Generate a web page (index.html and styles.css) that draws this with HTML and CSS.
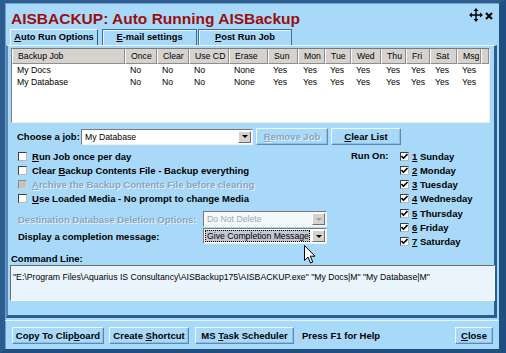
FILE: index.html
```html
<!DOCTYPE html>
<html lang="en">
<head>
  <meta charset="UTF-8">
  <title>AISBACKUP: Auto Running AISBackup</title>
  <link rel="stylesheet" href="styles.css">
</head>
<body>
  <div class="window">
    <div class="titlebar">
      <h1 class="title">AISBACKUP: Auto Running AISBackup</h1>
      <div class="caption-icons">
        <svg class="icon-move" width="14" height="14" viewBox="0 0 14 14">
          <path d="M7 1 V13 M1 7 H13" stroke="#000" stroke-width="1.4" fill="none"/>
          <path d="M7 0 L9.5 3 H4.5 Z M7 14 L9.5 11 H4.5 Z M0 7 L3 4.5 V9.5 Z M14 7 L11 4.5 V9.5 Z" fill="#000"/>
        </svg>
        <svg class="icon-close" width="8" height="8" viewBox="0 0 8 8">
          <path d="M1 1 L7 7 M7 1 L1 7" stroke="#000" stroke-width="2" fill="none"/>
        </svg>
      </div>
    </div>

    <div class="tabs">
      <div class="tab active"><u>A</u>uto Run Options</div>
      <div class="tab email"><u>E</u>-mail settings</div>
      <div class="tab post"><u>P</u>ost Run Job</div>
    </div>

    <div class="page">
      <div class="jobs">
        <div class="jobs-head">
          <div>Backup Job</div><div>Once</div><div>Clear</div><div>Use CD</div><div>Erase</div>
          <div>Sun</div><div>Mon</div><div>Tue</div><div>Wed</div><div>Thu</div><div>Fri</div>
          <div>Sat</div><div>Msg</div><div></div>
        </div>
        <div class="jobs-row">
          <div>My Docs</div><div>No</div><div>No</div><div>No</div><div>None</div>
          <div>Yes</div><div>Yes</div><div>Yes</div><div>Yes</div><div>Yes</div><div>Yes</div>
          <div>Yes</div><div>Yes</div><div></div>
        </div>
        <div class="jobs-row">
          <div>My Database</div><div>No</div><div>No</div><div>No</div><div>None</div>
          <div>Yes</div><div>Yes</div><div>Yes</div><div>Yes</div><div>Yes</div><div>Yes</div>
          <div>Yes</div><div>Yes</div><div></div>
        </div>
      </div>

      <div class="job-row">
        <span class="label">Choose a job:</span>
        <div class="combo job-combo">
          <span class="combo-text">My Database</span>
          <span class="combo-btn"><span class="arrow"></span></span>
        </div>
        <button class="btn remove" disabled><u>R</u>emove Job</button>
        <button class="btn clear"><u>C</u>lear List</button>
      </div>

      <div class="options">
        <div class="opts-left">
          <div class="check"><span class="box"></span><span><u>R</u>un Job once per day</span></div>
          <div class="check"><span class="box"></span><span>Clear <u>B</u>ackup Contents File - Backup everything</span></div>
          <div class="check disabled"><span class="box"></span><span><u>A</u>rchive the Backup Contents File before clearing</span></div>
          <div class="check"><span class="box"></span><span><u>U</u>se Loaded Media - No prompt to change Media</span></div>

          <div class="select-row dest">
            <span class="label muted">Destination Database Deletion Options:</span>
            <div class="combo off">
              <span class="combo-text">Do Not Delete</span>
              <span class="combo-btn"><span class="arrow"></span></span>
            </div>
          </div>
          <div class="select-row">
            <span class="label">Display a completion message:</span>
            <div class="combo focus">
              <span class="combo-text"><span class="sel">Give Completion Message</span></span>
              <span class="combo-btn"><span class="arrow"></span></span>
            </div>
          </div>
        </div>

        <div class="run-on">
          <span class="label">Run On:</span>
          <div class="days">
            <div class="check on"><span class="box"><svg width="7" height="7" viewBox="0 0 7 7"><path d="M0.5 3 L2.5 5.2 L6.5 1" stroke="#000" stroke-width="1.6" fill="none"/></svg></span><span><u>1</u> Sunday</span></div>
            <div class="check on"><span class="box"><svg width="7" height="7" viewBox="0 0 7 7"><path d="M0.5 3 L2.5 5.2 L6.5 1" stroke="#000" stroke-width="1.6" fill="none"/></svg></span><span><u>2</u> Monday</span></div>
            <div class="check on"><span class="box"><svg width="7" height="7" viewBox="0 0 7 7"><path d="M0.5 3 L2.5 5.2 L6.5 1" stroke="#000" stroke-width="1.6" fill="none"/></svg></span><span><u>3</u> Tuesday</span></div>
            <div class="check on"><span class="box"><svg width="7" height="7" viewBox="0 0 7 7"><path d="M0.5 3 L2.5 5.2 L6.5 1" stroke="#000" stroke-width="1.6" fill="none"/></svg></span><span><u>4</u> Wednesday</span></div>
            <div class="check on"><span class="box"><svg width="7" height="7" viewBox="0 0 7 7"><path d="M0.5 3 L2.5 5.2 L6.5 1" stroke="#000" stroke-width="1.6" fill="none"/></svg></span><span><u>5</u> Thursday</span></div>
            <div class="check on"><span class="box"><svg width="7" height="7" viewBox="0 0 7 7"><path d="M0.5 3 L2.5 5.2 L6.5 1" stroke="#000" stroke-width="1.6" fill="none"/></svg></span><span><u>6</u> Friday</span></div>
            <div class="check on"><span class="box"><svg width="7" height="7" viewBox="0 0 7 7"><path d="M0.5 3 L2.5 5.2 L6.5 1" stroke="#000" stroke-width="1.6" fill="none"/></svg></span><span><u>7</u> Saturday</span></div>
          </div>
        </div>
      </div>

      <div class="cmd-label">Command Line:</div>
      <div class="cmd">"E:\Program Files\Aquarius IS Consultancy\AISBackup175\AISBACKUP.exe" "My Docs|M" "My Database|M"</div>
    </div>

    <div class="footer">
      <button class="btn copy">Copy To Clip<u>b</u>oard</button>
      <button class="btn shortcut">Create <u>S</u>hortcut</button>
      <button class="btn task">MS <u>T</u>ask Scheduler</button>
      <span class="help">Press F1 for Help</span>
      <button class="btn close"><u>C</u>lose</button>
    </div>

    <svg class="cursor" width="12" height="19" viewBox="0 0 12 19">
      <path d="M0.5 0.5 V15.5 L4 12 L6.5 18 L8.8 17 L6.3 11.2 H11 Z" fill="#fff" stroke="#000" stroke-width="1"/>
    </svg>
  </div>
</body>
</html>
```

FILE: styles.css
```css
body {
  margin: 0;
  font-family: "Liberation Sans", Arial, sans-serif;
  font-size: 8.7px;
  color: #000;
}

.window {
  position: relative;
  width: 506px;
  height: 353px;
  box-sizing: border-box;
  background: #a9d9f9;
  border-style: solid;
  border-width: 3px 7px 4px 5px;
  border-color: #2c5d8e #1f4f80 #1f4f80 #2c5d8e;
  box-shadow: inset 1px 1px 0 #6f9fcc;
  display: flex;
  flex-direction: column;
  overflow: hidden;
}

.titlebar {
  height: 26px;
  display: flex;
  justify-content: space-between;
  align-items: flex-start;
}

.title {
  margin: 0;
  padding: 6px 0 0 6px;
  line-height: 20px;
  font-size: 15.5px;
  font-weight: bold;
  color: #990f10;
}

.caption-icons {
  display: flex;
  align-items: center;
  gap: 2px;
  padding: 5px 6px 0 0;
}

.icon-close {
  margin-top: 1px;
}

.tabs {
  height: 16px;
  display: flex;
  padding-left: 5px;
}

.tab {
  box-sizing: border-box;
  height: 16px;
  padding-top: 2px;
  text-align: center;
  font-size: 9.3px;
  font-weight: bold;
  border: 1px solid #3a6c9c;
  border-bottom: none;
  box-shadow: inset 1px 1px 0 #e6f5ff;
}

.tab.active {
  width: 88px;
  margin-right: 4px;
  border-color: #f4fbff #2b5c8c #2b5c8c #f4fbff;
  box-shadow: none;
  position: relative;
  z-index: 1;
}

.tab.email {
  width: 95px;
  margin-right: 1px;
}

.tab.post {
  width: 94px;
}

.page {
  box-sizing: border-box;
  margin-left: 1px;
  width: 491px;
  height: 273px;
  border-style: solid;
  border-width: 1px 3px 3px 2px;
  border-color: #f4fbff #2b5c8c #2b5c8c #5585b4;
  padding: 2px 3px 0 3px;
  display: flex;
  flex-direction: column;
}

.jobs {
  box-sizing: border-box;
  width: 479px;
  height: 75px;
  background: #fff;
  border: 1px solid;
  border-color: #7a7a7a #f0f0f0 #f0f0f0 #7a7a7a;
}

.jobs-head,
.jobs-row {
  display: grid;
  grid-template-columns: 113px 32px 32px 40px 39px 30px 27px 26px 30px 25px 24px 27px 24px 1fr;
}

.jobs-head {
  height: 15px;
}

.jobs-head div {
  box-sizing: border-box;
  background: #d6d3ce;
  border-left: 1px solid #fff;
  border-right: 1px solid #8d8d8d;
  border-bottom: 1px solid #8d8d8d;
  line-height: 14px;
  padding-left: 5px;
}

.jobs-row {
  height: 11.5px;
  line-height: 11.5px;
}

.jobs-head + .jobs-row {
  margin-top: 1px;
}

.jobs-row div {
  padding-left: 5px;
  white-space: nowrap;
}

.label {
  font-size: 9.5px;
  font-weight: bold;
  white-space: nowrap;
}

.muted,
.check.disabled {
  color: #8fa4b8;
  text-shadow: 1px 1px 0 #e4f4ff;
}

.job-row {
  display: flex;
  align-items: center;
  height: 17px;
  margin-top: 5px;
  padding-left: 6px;
}

.job-row .label {
  width: 64px;
}

.combo {
  box-sizing: border-box;
  height: 16px;
  display: flex;
  align-items: stretch;
  background: #fff;
  border: 1px solid;
  border-color: #7a7a7a #f0f0f0 #f0f0f0 #7a7a7a;
  padding: 1px;
}

.combo-text {
  flex: 1;
  line-height: 12px;
  padding-left: 2px;
  white-space: nowrap;
  overflow: hidden;
}

.combo-btn {
  width: 13px;
  background: #d6d3ce;
  border: 1px solid;
  border-color: #fff #6e6e6e #6e6e6e #fff;
  box-sizing: border-box;
  display: flex;
  align-items: center;
  justify-content: center;
}

.arrow {
  width: 0;
  height: 0;
  border-left: 3px solid transparent;
  border-right: 3px solid transparent;
  border-top: 3px solid #000;
}

.job-combo {
  width: 172px;
}

.btn {
  box-sizing: border-box;
  height: 17px;
  padding: 0;
  background: #a9d9f9;
  border: 1px solid;
  border-color: #eef8ff #5d8ab4 #5d8ab4 #eef8ff;
  box-shadow: inset -1px -1px 0 #8fc0e4;
  font-family: "Liberation Sans", Arial, sans-serif;
  font-size: 9.5px;
  font-weight: bold;
  color: #000;
  text-align: center;
  white-space: nowrap;
}

.btn.remove {
  width: 72px;
  margin-left: 3px;
  color: #8fa4b8;
  text-shadow: 1px 1px 0 #e4f4ff;
}

.btn.clear {
  width: 70px;
  margin-left: 3px;
}

.options {
  display: flex;
  margin-top: 4px;
}

.opts-left {
  width: 340px;
}

.check {
  display: flex;
  align-items: center;
  height: 14.27px;
  font-size: 9.5px;
  font-weight: bold;
  white-space: nowrap;
}

.opts-left .check {
  padding-left: 7px;
}

.box {
  box-sizing: border-box;
  width: 9px;
  height: 9px;
  margin-right: 5px;
  background: #fff;
  border: 1px solid;
  border-color: #404040 #b8b8b8 #b8b8b8 #404040;
  display: flex;
  align-items: center;
  justify-content: center;
  flex-shrink: 0;
}

.check.disabled .box {
  background: #c3c3c3;
  border-color: #8a8a8a #d8d8d8 #d8d8d8 #8a8a8a;
}

.days .box {
  margin-right: 3px;
}

.select-row {
  display: flex;
  align-items: center;
  height: 16px;
  padding-left: 7px;
}

.select-row.dest {
  margin-top: 5px;
  margin-bottom: 1px;
}

.select-row .label {
  width: 185px;
}

.select-row .combo {
  width: 124px;
}

.combo.off {
  background: #f4f8fb;
  color: #a0a8b0;
}

.combo.off .arrow {
  border-top-color: #a0a0a0;
}

.combo.focus .combo-text {
  padding-left: 0;
  margin-right: 2px;
}

.sel {
  display: block;
  height: 12px;
  box-sizing: border-box;
  background: #c3c8d4;
  border: 1px dotted #000;
  line-height: 10px;
  padding-left: 1px;
}

.run-on {
  display: flex;
  align-items: flex-start;
}

.run-on > .label {
  width: 49px;
  line-height: 14.27px;
}

.cmd-label {
  margin-top: 4px;
  font-size: 9.5px;
  font-weight: bold;
  line-height: 11px;
}

.cmd {
  box-sizing: border-box;
  margin-left: -1px;
  width: 485px;
  height: 36px;
  margin-top: 1px;
  background: #eaf4fc;
  border: 1px solid;
  border-color: #6d6d6d #f4fbff #f4fbff #6d6d6d;
  padding: 6px 0 0 2px;
  line-height: 11px;
  white-space: nowrap;
  overflow: hidden;
}

.footer {
  flex: 1;
  display: flex;
  align-items: center;
  padding: 0 6px 0 7px;
  border-top: 1px solid #e4f4ff;
  margin-top: 2px;
}

.btn.copy {
  width: 92px;
}

.btn.shortcut {
  width: 80px;
  margin-left: 5px;
}

.btn.task {
  width: 99px;
  margin-left: 6px;
}

.help {
  margin-left: 8px;
  font-size: 9.5px;
  font-weight: bold;
  flex: 1;
}

.btn.close {
  width: 38px;
}

.cursor {
  position: absolute;
  left: 299px;
  top: 242px;
}
```
